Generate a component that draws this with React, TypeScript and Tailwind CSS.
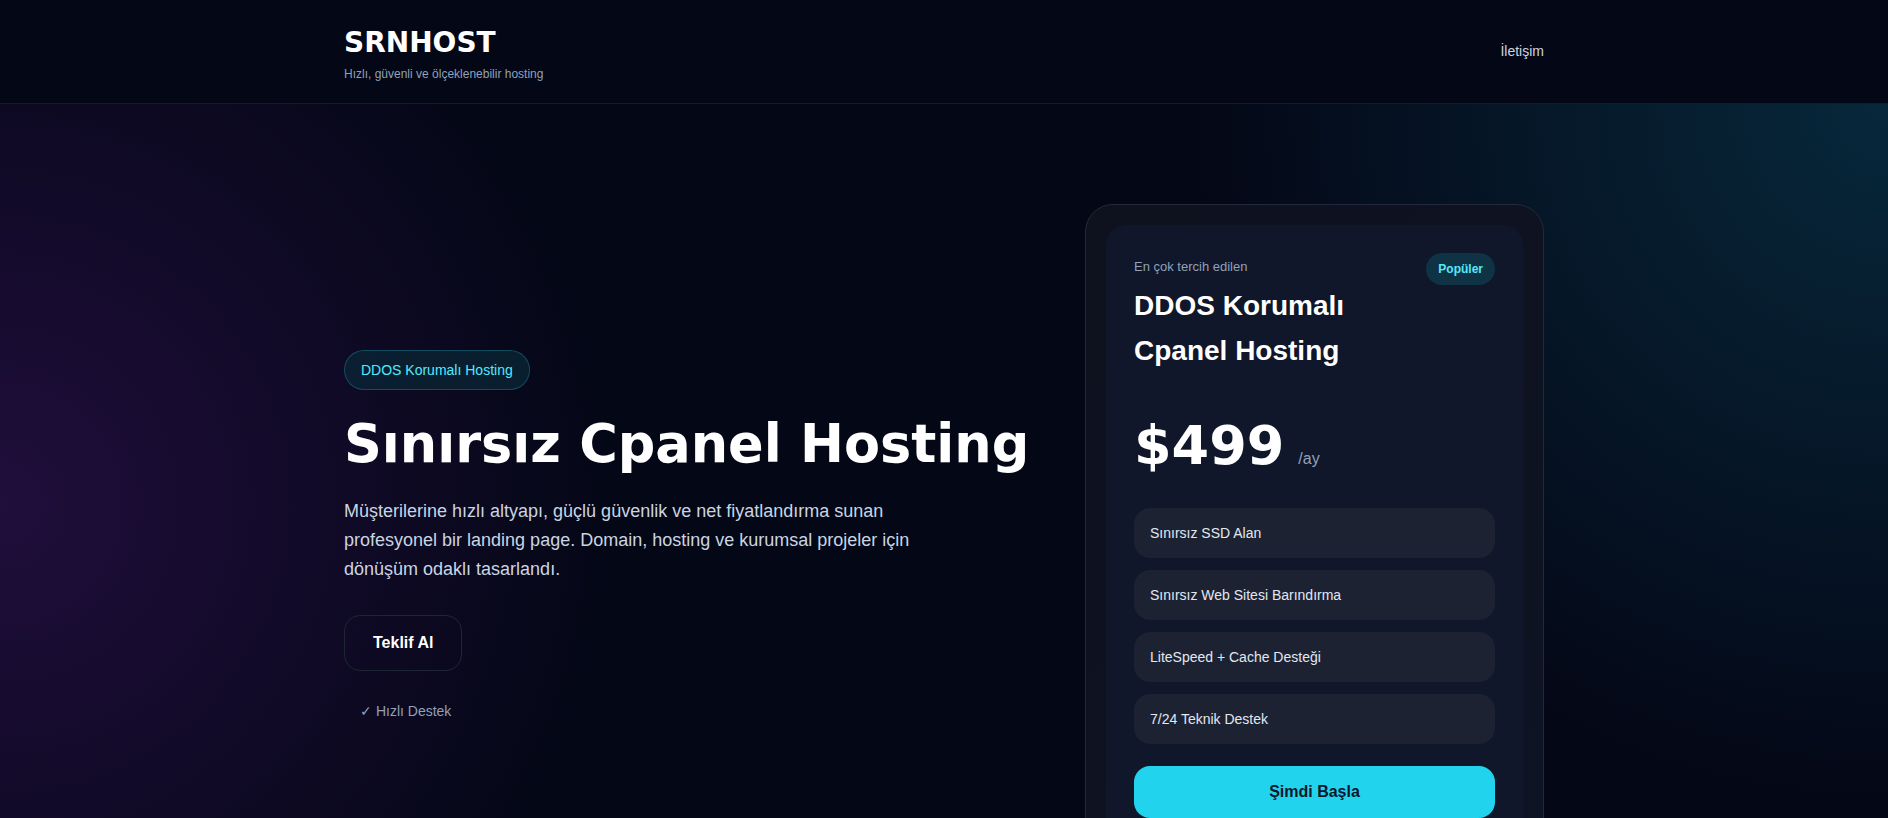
import React from 'react';

const features = [
  'Sınırsız SSD Alan',
  'Sınırsız Web Sitesi Barındırma',
  'LiteSpeed + Cache Desteği',
  '7/24 Teknik Destek',
];

function Header() {
  return (
    <header className="border-b border-[#161b2b] bg-[#040716]">
      <div className="mx-auto flex max-w-[1200px] items-center justify-between pt-[25px] pb-[21px]">
        <div>
          <div className="font-['DejaVu_Sans',sans-serif] text-[28px] font-bold leading-9 text-white">
            SRNHOST
          </div>
          <p className="mt-[5px] text-xs leading-4 text-slate-400">
            Hızlı, güvenli ve ölçeklenebilir hosting
          </p>
        </div>
        <nav className="mb-[5px]">
          <a className="text-sm text-slate-300">İletişim</a>
        </nav>
      </div>
    </header>
  );
}

function PricingCard() {
  return (
    <div className="rounded-[28px] border border-[#232a3b] bg-gradient-to-br from-[#0e111e] to-[#0e1424] p-5">
      <div className="rounded-[20px] bg-[#10172a] p-7">
        <div className="flex items-start justify-between">
          <div className="max-w-[260px]">
            <p className="mt-1 text-[13px] leading-5 text-slate-400">En çok tercih edilen</p>
            <h3 className="mt-1.5 text-[28px] font-bold leading-[45px] text-white">
              DDOS Korumalı Cpanel Hosting
            </h3>
          </div>
          <span className="rounded-full bg-[#0f3245] px-3 py-2 text-xs font-bold leading-4 text-cyan-300">
            Popüler
          </span>
        </div>

        {/* Price */}
        <div className="mt-[46px] flex items-baseline gap-3.5">
          <span className="font-['DejaVu_Sans',sans-serif] text-[54px] font-bold leading-none text-white">
            $499
          </span>
          <span className="text-base text-slate-400">/ay</span>
        </div>

        {/* Features */}
        <ul className="mt-[35px] flex flex-col gap-3">
          {features.map((f) => (
            <li key={f} className="rounded-2xl bg-[#1c2232] px-4 py-[15px] text-sm leading-5 text-slate-200">
              {f}
            </li>
          ))}
        </ul>

        <button className="mt-[22px] w-full rounded-2xl bg-[#22d3ee] py-3.5 text-base font-bold text-slate-900">
          Şimdi Başla
        </button>
      </div>
    </div>
  );
}

export default function App() {
  return (
    <div className="min-h-screen bg-[#040716] font-['Liberation_Sans',Arial,sans-serif]">
      <Header />

      <section className="bg-[radial-gradient(620px_circle_at_0px_400px,rgba(88,28,135,0.33),transparent),radial-gradient(700px_circle_at_1888px_0px,rgba(14,116,144,0.3),transparent)] pt-[100px] pb-24">
        <div className="mx-auto grid max-w-[1200px] grid-cols-[minmax(0,1fr)_459px] items-center gap-14">
          {/* Hero copy */}
          <div>
            <span className="inline-flex rounded-full border border-[#155e75]/70 bg-[#0a2838]/70 px-4 py-[9px] text-sm leading-5 text-cyan-300">
              DDOS Korumalı Hosting
            </span>
            <h1 className="mt-6 whitespace-nowrap font-['DejaVu_Sans',sans-serif] text-[52.5px] font-bold leading-[1.15] text-white">
              Sınırsız Cpanel Hosting
            </h1>
            <p className="mt-[22px] max-w-xl text-lg leading-relaxed text-slate-300">
              Müşterilerine hızlı altyapı, güçlü güvenlik ve net fiyatlandırma sunan profesyonel bir landing
              page. Domain, hosting ve kurumsal projeler için dönüşüm odaklı tasarlandı.
            </p>
            <button className="mt-[30px] rounded-2xl border border-[#1f2535] px-7 py-[15px] text-base font-bold leading-6 text-white">
              Teklif Al
            </button>
            <div className="mt-[30px] ml-4 text-sm leading-5 text-slate-400">✓ Hızlı Destek</div>
          </div>

          <PricingCard />
        </div>
      </section>
    </div>
  );
}
